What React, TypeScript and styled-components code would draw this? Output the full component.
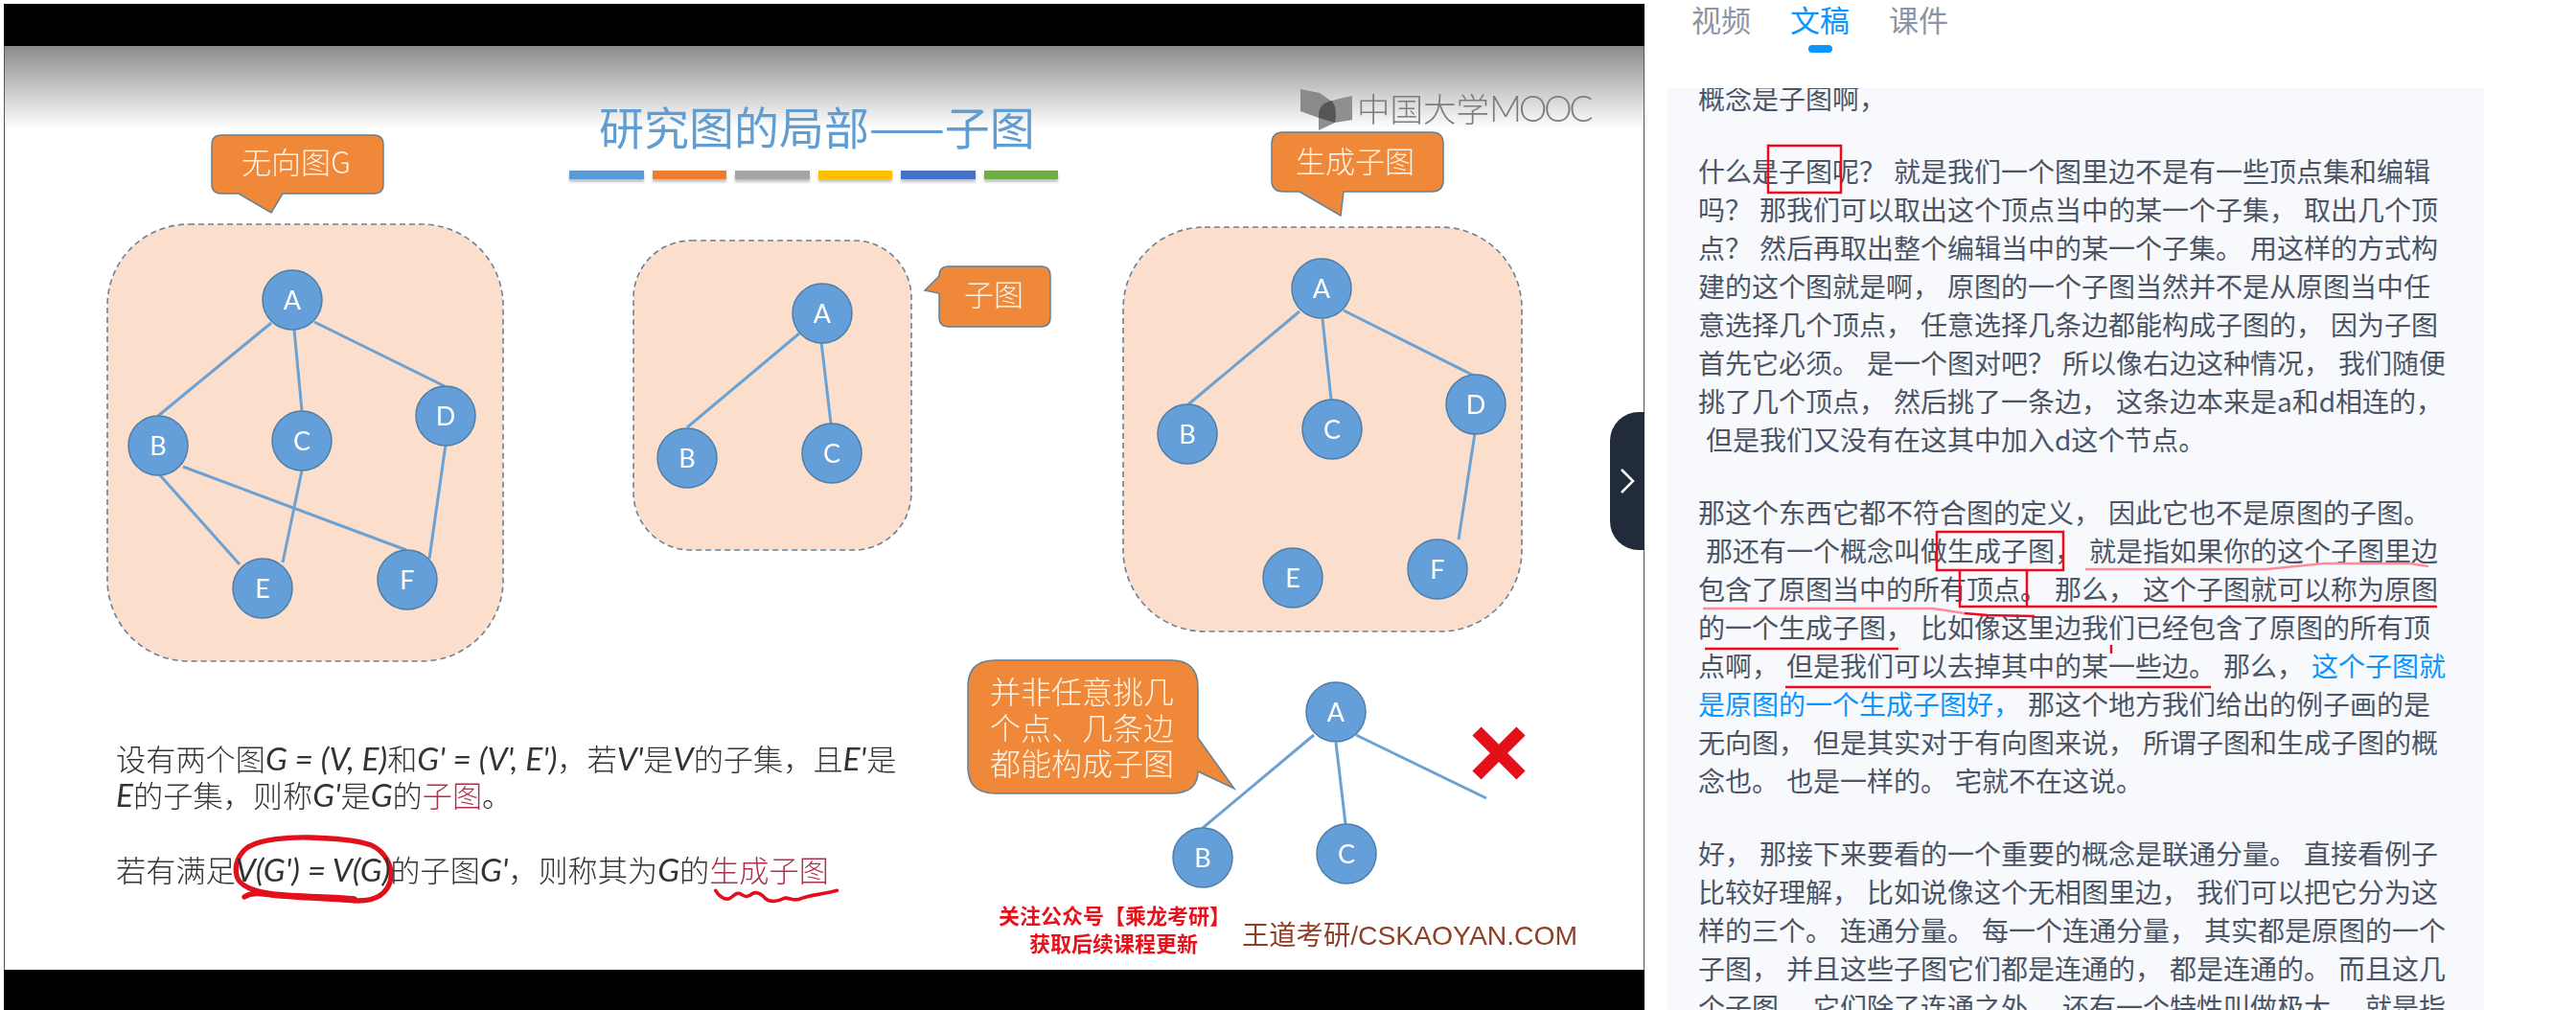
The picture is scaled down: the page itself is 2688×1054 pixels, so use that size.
import styled, { createGlobalStyle } from 'styled-components';

const cjk = '"Noto Sans CJK SC", "Noto Sans", sans-serif';

const GlobalStyle = createGlobalStyle`
  html, body {
    margin: 0;
    padding: 0;
    background: #fff;
    overflow: hidden;
  }
`;

const Page = styled.div`
  position: relative;
  display: flex;
  width: 2688px;
  height: 1054px;
  overflow: hidden;
  background: #fff;
  font-family: ${cjk};
`;

const VideoColumn = styled.div`
  position: relative;
  display: flex;
  flex-direction: column;
  flex: 0 0 1716px;
  box-sizing: border-box;
  padding: 4px 0 0 4px;
`;

const BlackBar = styled.div<{ $h: number }>`
  flex: 0 0 ${(p) => p.$h}px;
  background: #000;
`;

const Slide = styled.div`
  position: relative;
  flex: 0 0 964px;
  box-sizing: border-box;
  border-left: 1px solid #555;
  border-right: 1px solid #555;
  overflow: hidden;
  background: linear-gradient(#8b8b8b 0, #fff 86px);
  filter: blur(0.5px);
`;

const SlideArt = styled.svg`
  position: absolute;
  left: -1px;
  top: 0;
  width: 1712px;
  height: 964px;
`;

const Title = styled.h1`
  position: absolute;
  left: 620px;
  top: 49px;
  margin: 0;
  font-size: 47px;
  line-height: 68px;
  font-weight: 400;
  white-space: nowrap;
  color: #5f9dd3;
`;

const TitleBars = styled.div`
  position: absolute;
  left: 589px;
  top: 130px;
  display: flex;
  gap: 9px;
`;

const TitleBar = styled.span<{ $c: string }>`
  width: 77.5px;
  height: 9px;
  background: ${(p) => p.$c};
  box-shadow: 0 3px 3px rgba(0, 0, 0, 0.25);
`;

const LogoText = styled.div`
  position: absolute;
  left: 1411px;
  top: 39px;
  display: flex;
  align-items: center;
  height: 50px;
  color: #7d7d7d;
  white-space: nowrap;
`;

const LogoCjk = styled.span`
  font-size: 34.5px;
  font-weight: 300;
`;

const LogoLatin = styled.span`
  font-family: Lato, sans-serif;
  font-size: 37.5px;
  font-weight: 300;
  letter-spacing: -3.4px;
`;

const Formula = styled.div`
  position: absolute;
  left: 116px;
  top: 724px;
  color: #333;
  font-size: 31.2px;
  line-height: 38px;
  font-weight: 300;
  white-space: nowrap;
`;

const FormulaLine = styled.p<{ $gap?: number }>`
  margin: 0 0 ${(p) => p.$gap ?? 0}px;
`;

const MathText = styled.i`
  font-family: Lato, sans-serif;
  font-size: 33.5px;
  font-weight: 400;
`;

const Term = styled.span`
  color: #b0304a;
`;

const Watermark = styled.div`
  position: absolute;
  left: 1037px;
  top: 892px;
  width: 240px;
  color: #e8101a;
  font-size: 22px;
  line-height: 29px;
  font-weight: 700;
  text-align: center;
  white-space: nowrap;
`;

const SiteMark = styled.div`
  position: absolute;
  left: 1291px;
  top: 908px;
  color: #8f3f25;
  font-family: "Liberation Sans", ${cjk};
  font-size: 28.3px;
  line-height: 40px;
  white-space: nowrap;
`;

const CollapseHandle = styled.button`
  position: absolute;
  right: 0;
  top: 430px;
  display: flex;
  align-items: center;
  justify-content: center;
  width: 36px;
  height: 144px;
  padding: 0;
  border: 0;
  border-radius: 30px 0 0 30px;
  background: #222b3a;
`;

const Sidebar = styled.aside`
  display: flex;
  flex-direction: column;
  flex: 1;
  min-width: 0;
`;

const Tabs = styled.nav`
  display: flex;
  flex: 0 0 92px;
  gap: 41px;
  box-sizing: border-box;
  padding-left: 49px;
`;

const Tab = styled.a<{ $active?: boolean }>`
  position: relative;
  height: 40px;
  font-size: 31px;
  line-height: 40px;
  color: ${(p) => (p.$active ? '#0a95ff' : '#8b95a5')};

  &::after {
    content: '';
    display: ${(p) => (p.$active ? 'block' : 'none')};
    position: absolute;
    left: 19px;
    top: 47px;
    width: 25px;
    height: 8px;
    border-radius: 4px;
    background: #0a95ff;
  }
`;

const Transcript = styled.section`
  width: 852px;
  flex: 1;
  min-height: 0;
  margin-left: 24px;
  box-sizing: border-box;
  padding: 0 32px;
  overflow: hidden;
  background: #f7f9fd;
`;

const TranscriptBody = styled.div`
  margin-top: -10px;
  color: #4b5565;
  font-size: 28px;
  line-height: 40px;
  word-spacing: 1.7px;
`;

const Paragraph = styled.p`
  margin: 0 0 36px;
`;

const Highlight = styled.span`
  color: #0a95ff;
`;

const InkLayer = styled.svg`
  position: absolute;
  left: 0;
  top: 0;
  width: 2688px;
  height: 1054px;
  pointer-events: none;
`;

const PenBox = styled.path`
  fill: none;
  stroke: #ee0a1c;
  stroke-width: 2.5;
`;

const PenLine = styled.path<{ $soft?: boolean }>`
  fill: none;
  stroke: ${(p) => (p.$soft ? '#ff8c96' : '#ee0a1c')};
  stroke-width: 2.5;
`;

const GraphFrame = styled.rect`
  fill: #fbdfcc;
  stroke: #6d8197;
  stroke-width: 1.6;
  stroke-dasharray: 6 4;
`;

const Edge = styled.line`
  stroke: #6ba1d3;
  stroke-width: 3;
`;

const NodeShape = styled.circle`
  fill: #649fda;
  stroke: #4d7ea8;
  stroke-width: 1.5;
`;

const NodeLabel = styled.text`
  fill: #fff;
  font-family: Lato, sans-serif;
  font-size: 27px;
  text-anchor: middle;
`;

const BubbleShape = styled.path`
  fill: #f0883a;
  stroke: #5f8199;
  stroke-width: 1.5;
`;

const BubbleLabel = styled.text<{ $big?: boolean }>`
  fill: #fff3e6;
  font-family: ${cjk};
  font-size: ${(p) => (p.$big ? 32 : 31)}px;
  font-weight: 300;
`;

const RedInk = styled.path<{ $w: number }>`
  fill: none;
  stroke: #e3101c;
  stroke-width: ${(p) => p.$w};
  stroke-linecap: round;
  stroke-linejoin: round;
`;

const CrossMark = styled.path`
  fill: none;
  stroke: #e3101c;
  stroke-width: 13;
`;

type NodeData = [string, number, number];
type EdgeData = [number, number, number, number];

const graphs: { nodes: NodeData[]; edges: EdgeData[] }[] = [
  {
    nodes: [['A', 305, 313], ['B', 165, 465], ['C', 315, 460], ['D', 465, 434], ['E', 274, 614], ['F', 425, 605]],
    edges: [
      [283, 337, 165, 434], [307, 344, 315, 429], [328, 336, 464, 403], [167, 496, 250, 589],
      [191, 487, 424, 574], [315, 491, 295, 587], [465, 464, 448, 583],
    ],
  },
  {
    nodes: [['A', 858, 327], ['B', 717, 478], ['C', 868, 473]],
    edges: [[834, 348, 717, 446], [857, 357, 867, 442]],
  },
  {
    nodes: [['A', 1379, 301], ['B', 1239, 453], ['C', 1390, 448], ['D', 1540, 422], ['E', 1349, 603], ['F', 1500, 594]],
    edges: [[1356, 325, 1240, 422], [1380, 333, 1389, 417], [1402, 324, 1538, 392], [1539, 452, 1522, 563]],
  },
  {
    nodes: [['A', 1394, 743], ['B', 1255, 895], ['C', 1405, 891]],
    edges: [[1371, 767, 1255, 864], [1394, 775, 1404, 860], [1415, 767, 1551, 833]],
  },
];

const barColors = ['#5b9bd5', '#ed7d31', '#a5a5a5', '#ffc000', '#4472c4', '#70ad47'];

const Graph = ({ nodes, edges }: { nodes: NodeData[]; edges: EdgeData[] }) => (
  <g>
    {edges.map(([x1, y1, x2, y2]) => (
      <Edge key={`${x1}-${y1}-${x2}`} x1={x1} y1={y1} x2={x2} y2={y2} />
    ))}
    {nodes.map(([label, x, y]) => (
      <g key={label}>
        <NodeShape cx={x} cy={y} r={31} />
        <NodeLabel x={x} y={y + 10}>{label}</NodeLabel>
      </g>
    ))}
  </g>
);

const App = () => {
  return (
    <Page>
      <GlobalStyle />
      <VideoColumn>
        <BlackBar $h={44} />
        <Slide>
          <SlideArt viewBox="4 48 1712 964">
            <GraphFrame x={112} y={234} width={413} height={456} rx={85} />
            <GraphFrame x={661} y={251} width={290} height={323} rx={60} />
            <GraphFrame x={1172} y={237} width={416} height={422} rx={85} />
            {graphs.map((g) => (
              <Graph key={g.nodes[0][1]} nodes={g.nodes} edges={g.edges} />
            ))}

            <BubbleShape d="M231 141H390Q400 141 400 151V192Q400 202 390 202H295L283 222L249 202H231Q221 202 221 192V151Q221 141 231 141Z" />
            <BubbleLabel x={252} y={181}>无向图G</BubbleLabel>
            <BubbleShape d="M1339 138H1494Q1506 138 1506 150V188Q1506 200 1494 200H1402L1399 225L1356 200H1339Q1327 200 1327 188V150Q1327 138 1339 138Z" />
            <BubbleLabel x={1352} y={180}>生成子图</BubbleLabel>
            <BubbleShape d="M990 278H1086Q1096 278 1096 288V331Q1096 341 1086 341H990Q980 341 980 331V306L965 303L980 288Q980 278 990 278Z" />
            <BubbleLabel x={1006} y={319}>子图</BubbleLabel>
            <BubbleShape d="M1038 689H1222Q1250 689 1250 717V770L1288 823L1250 805Q1250 828 1222 828H1038Q1010 828 1010 800V717Q1010 689 1038 689Z" />
            <BubbleLabel $big x={1033} y={734}>并非任意挑几</BubbleLabel>
            <BubbleLabel $big x={1033} y={772}>个点、几条边</BubbleLabel>
            <BubbleLabel $big x={1033} y={809}>都能构成子图</BubbleLabel>

            <path d="M1357 93L1377 97L1390 106L1377 113L1376 123L1357 116Z" fill="#8a8a8a" />
            <path d="M1411 100V125L1393 128L1376 136V113L1390 105Q1400 102 1411 100Z" fill="#8f8f8f" />
            <path d="M1390 105Q1376 108 1376 120V123L1393 128Q1396 114 1390 105Z" fill="#555" />

            <CrossMark d="M1541 763L1587 809M1587 763L1541 809" />

            <g transform="translate(230 860) scale(0.3333)">
              <RedInk $w={16} d="M75 228C100 212 130 218 160 222C250 232 340 232 430 240C480 240 520 225 533 175C540 130 515 85 470 65C420 48 350 45 280 42C210 40 130 48 90 70C55 92 42 130 52 165C62 195 100 210 160 218C250 228 340 226 420 234" />
              <RedInk $w={10} d="M340 236L420 242" />
            </g>
            <g transform="translate(730 880) scale(0.3333)">
              <RedInk $w={11} d="M50 148C60 165 80 180 95 172C108 165 115 150 130 160C142 168 152 170 165 158C180 150 192 158 205 172C220 186 245 182 265 172C280 168 298 186 320 172C345 162 385 160 430 148" />
            </g>
          </SlideArt>

          <Title>研究图的局部——子图</Title>
          <TitleBars>
            {barColors.map((c) => (
              <TitleBar key={c} $c={c} />
            ))}
          </TitleBars>

          <LogoText>
            <LogoCjk>中国大学</LogoCjk>
            <LogoLatin>MOOC</LogoLatin>
          </LogoText>

          <Formula>
            <FormulaLine>
              设有两个图<MathText>G = (V, E)</MathText>和<MathText>G' = (V', E')</MathText>，若<MathText>V'</MathText>是<MathText>V</MathText>的子集，且<MathText>E'</MathText>是
            </FormulaLine>
            <FormulaLine $gap={40}>
              <MathText>E</MathText>的子集，则称<MathText>G'</MathText>是<MathText>G</MathText>的<Term>子图</Term>。
            </FormulaLine>
            <FormulaLine>
              若有满足<MathText>V(G') = V(G)</MathText>的子图<MathText>G'</MathText>，则称其为<MathText>G</MathText>的<Term>生成子图</Term>
            </FormulaLine>
          </Formula>

          <Watermark>
            关注公众号【乘龙考研】
            <br />
            获取后续课程更新
          </Watermark>
          <SiteMark>王道考研/CSKAOYAN.COM</SiteMark>
        </Slide>
        <BlackBar $h={42} />
        <CollapseHandle aria-label="收起">
          <svg width="16" height="26" viewBox="0 0 16 26" fill="none">
            <path d="M2 1L14 13L2 25" stroke="#fff" strokeWidth="2.5" />
          </svg>
        </CollapseHandle>
      </VideoColumn>

      <Sidebar>
        <Tabs>
          <Tab>视频</Tab>
          <Tab $active>文稿</Tab>
          <Tab>课件</Tab>
        </Tabs>
        <Transcript>
          <TranscriptBody>
            <Paragraph>概念是子图啊，</Paragraph>
            <Paragraph>
              什么是子图呢？ 就是我们一个图里边不是有一些顶点集和编辑吗？ 那我们可以取出这个顶点当中的某一个子集， 取出几个顶点？ 然后再取出整个编辑当中的某一个子集。 用这样的方式构建的这个图就是啊， 原图的一个子图当然并不是从原图当中任意选择几个顶点， 任意选择几条边都能构成子图的， 因为子图首先它必须。 是一个图对吧？ 所以像右边这种情况， 我们随便挑了几个顶点， 然后挑了一条边， 这条边本来是a和d相连的，
              {' \u00a0'}但是我们又没有在这其中加入d这个节点。
            </Paragraph>
            <Paragraph>
              那这个东西它都不符合图的定义， 因此它也不是原图的子图。
              {' \u00a0'}那还有一个概念叫做生成子图， 就是指如果你的这个子图里边包含了原图当中的所有顶点。 那么， 这个子图就可以称为原图的一个生成子图， 比如像这里边我们已经包含了原图的所有顶点啊， 但是我们可以去掉其中的某一些边。 那么， <Highlight>这个子图就是原图的一个生成子图好，</Highlight> 那这个地方我们给出的例子画的是无向图， 但是其实对于有向图来说， 所谓子图和生成子图的概念也。 也是一样的。 宅就不在这说。
            </Paragraph>
            <Paragraph>
              好， 那接下来要看的一个重要的概念是联通分量。 直接看例子比较好理解， 比如说像这个无相图里边， 我们可以把它分为这样的三个。 连通分量。 每一个连通分量， 其实都是原图的一个子图， 并且这些子图它们都是连通的， 都是连通的。 而且这几个子图， 它们除了连通之外， 还有一个特性叫做极大， 就是指
            </Paragraph>
          </TranscriptBody>
        </Transcript>
      </Sidebar>

      <InkLayer viewBox="0 0 2688 1054">
        <PenBox d="M1845 152H1921V201H1845Z" />
        <PenBox d="M2021 555H2153V595H2021Z" />
        <PenBox d="M2045 595V633H2543M2115 595V633" />
        <PenLine $soft d="M2176 594H2365L2425 588H2514L2534 591" />
        <PenLine $soft d="M1777 635H2017L2050 640" />
        <PenLine d="M2050 640L2074 642L2123 643" />
        <PenLine d="M1779 677H1981" />
        <PenLine d="M1863 717H2307" />
        <PenLine d="M2203 673V682" />
      </InkLayer>
    </Page>
  );
};

export default App;
